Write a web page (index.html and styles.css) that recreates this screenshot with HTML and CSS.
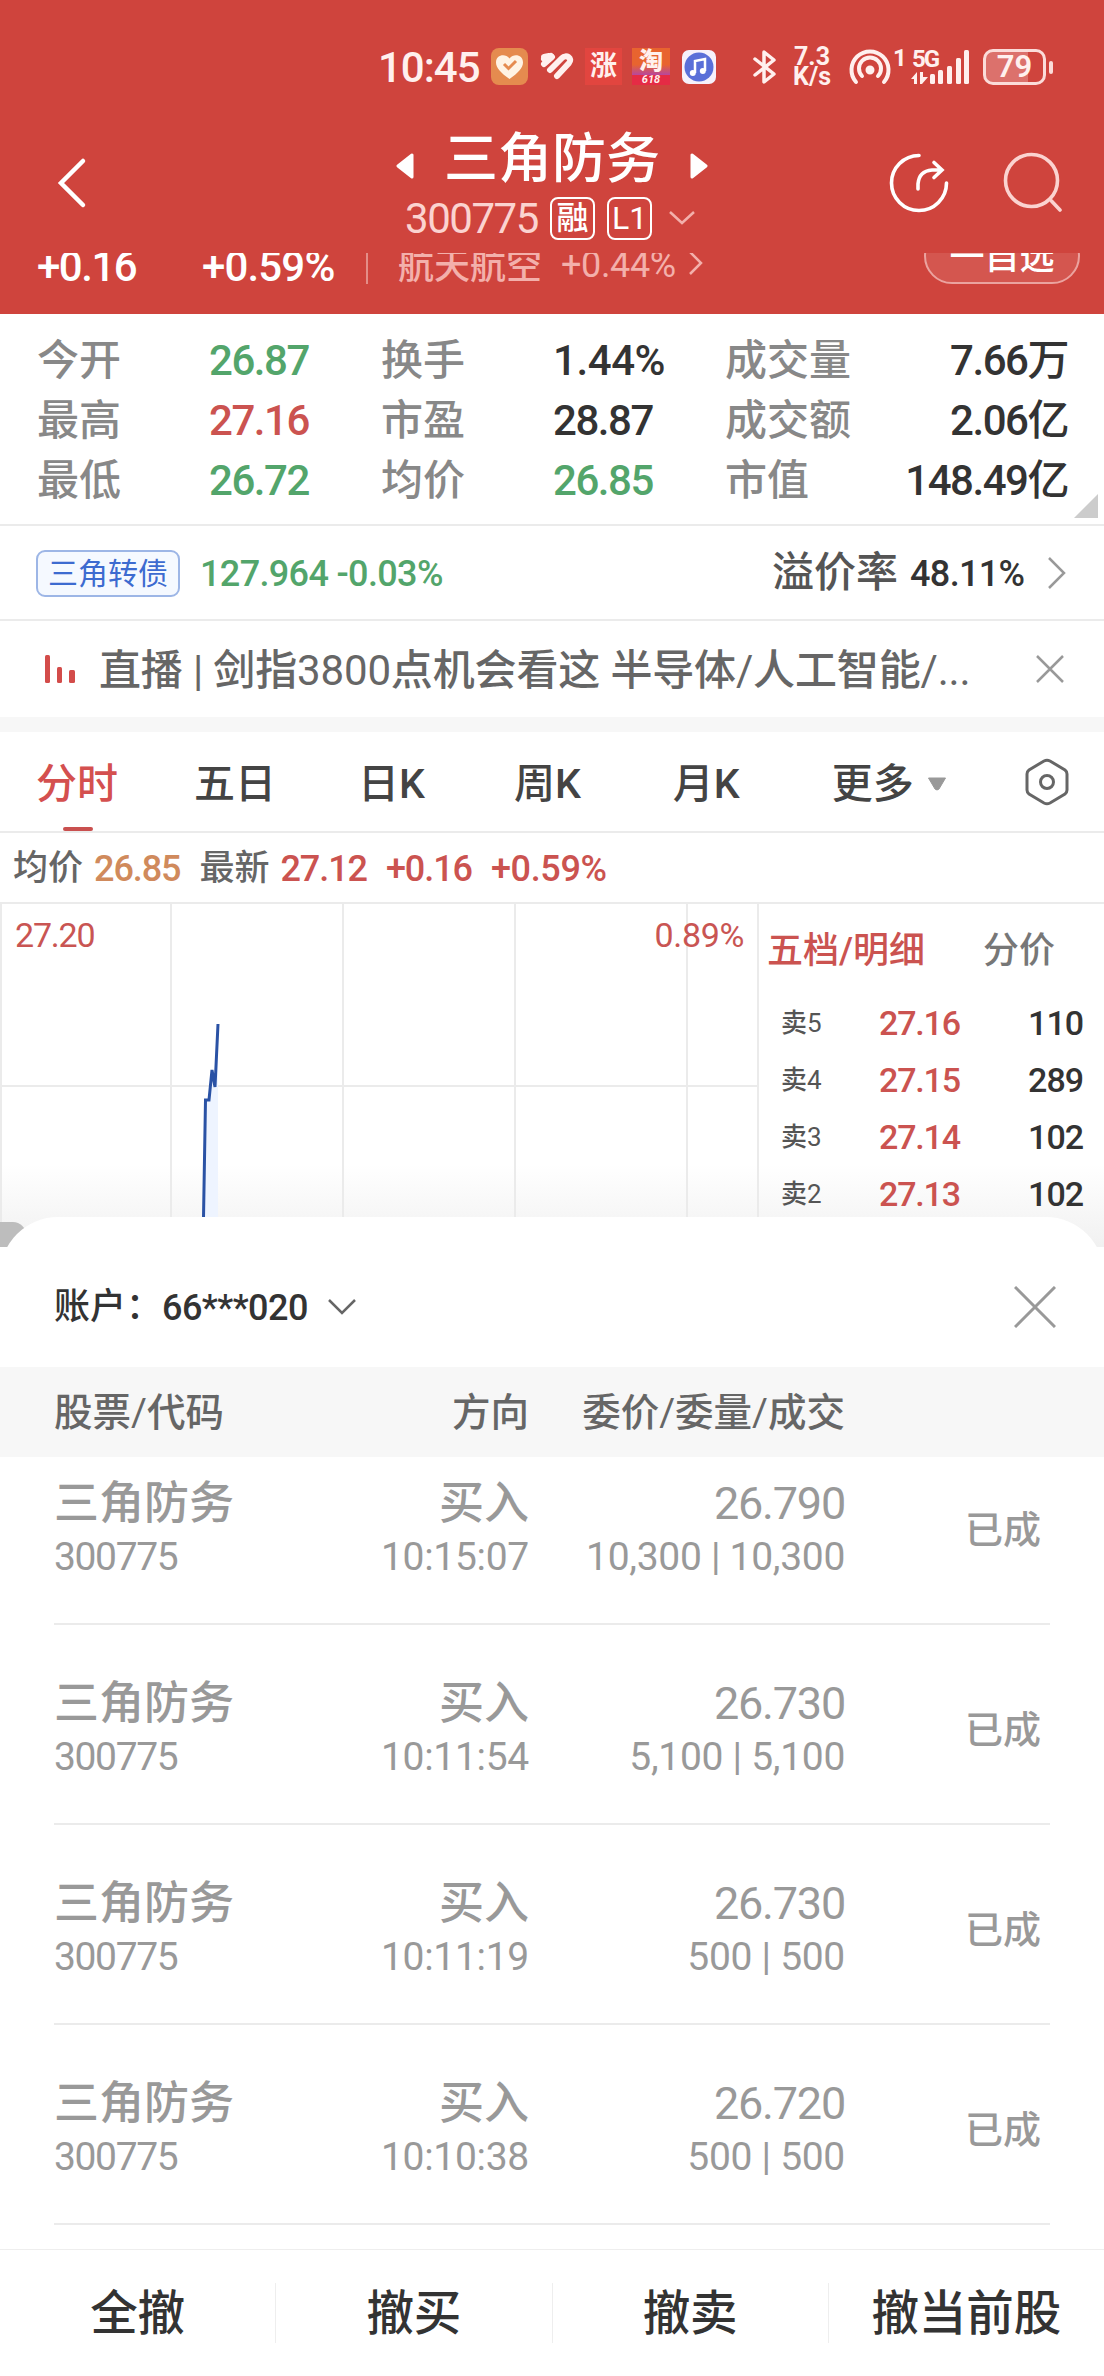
FILE: index.html
```html
<!DOCTYPE html>
<html lang="zh-CN">
<head>
    <meta charset="UTF-8">
    <meta name="viewport" content="width=device-width, initial-scale=1.0">
    <title>三角防务 300775</title>
    <link rel="stylesheet" href="styles.css">
</head>
<body>
    <header class="header">
        <div class="status-bar">
            <span class="clock">10:45</span>
            <svg class="app-heart" width="37" height="37" viewBox="0 0 37 37">
                <rect width="37" height="37" rx="8" fill="#e58b4f"/>
                <path d="M18.500 31C10 25 5 20 5 14.500C5 7 14 5 18.500 10.500C23 5 32 7 32 14.500C32 20 27 25 18.500 31Z" fill="#fff3e4"/>
                <path d="M13 16l4.500 4.500L25 13" fill="none" stroke="#e58b4f" stroke-width="3"/>
            </svg>
            <svg class="app-mi" width="34" height="30" viewBox="0 0 34 30" fill="none" stroke="#fff0ee" stroke-width="6" stroke-linecap="round">
                <path d="M4 5L9 4M4 12L12 5M10 18L22 6C26 2 33 6 29 11L17 24"/>
                <path d="M4 7L6 9L11 4"/>
            </svg>
            <span class="app-icon app-zhang">涨</span>
            <span class="app-icon app-tao"><b>淘</b><i>618</i></span>
            <svg class="app-music" width="34" height="34" viewBox="0 0 34 34">
                <rect width="34" height="34" rx="7" fill="#f6f1fb"/>
                <circle cx="17" cy="17" r="14.500" fill="#5a6fd8"/>
                <path d="M13 23V11L23 9V21" fill="none" stroke="#fff" stroke-width="2.500"/>
                <circle cx="10.800" cy="23" r="3" fill="#fff"/>
                <circle cx="20.800" cy="21" r="3" fill="#fff"/>
            </svg>
            <svg class="bluetooth" width="24" height="36" viewBox="0 0 24 36" fill="none" stroke="#fff0ee" stroke-width="3.500" stroke-linejoin="round" stroke-linecap="round">
                <path d="M2 10L21 25L11 33V3L21 11L2 26"/>
            </svg>
            <span class="net-speed"><span>7.3</span><span>K/s</span></span>
            <svg class="hotspot" width="42" height="36" viewBox="0 0 42 36" fill="none" stroke="#fff0ee" stroke-width="4" stroke-linecap="round">
                <path d="M7 33A18.500 18.500 0 1 1 35 33"/>
                <path d="M13 27A11 11 0 1 1 29 27"/>
                <circle cx="21" cy="21" r="2.500" fill="#fff0ee"/>
            </svg>
            <span class="sim">1</span>
            <span class="signal">
                <span class="sim">5G</span>
                <svg width="60" height="36" viewBox="0 0 60 36" fill="#fff0ee">
                    <path d="M0 30L6 23V35H3V30ZM9 23H12V28H17L11 35H9Z"/>
                    <rect x="19" y="25" width="5" height="10" rx="1.500"/>
                    <rect x="27" y="21" width="5" height="14" rx="1.500"/>
                    <rect x="36" y="17" width="5" height="18" rx="1.500"/>
                    <rect x="45" y="9" width="5" height="26" rx="1.500"/>
                    <rect x="53" y="1" width="5" height="34" rx="1.500"/>
                </svg>
            </span>
            <span class="battery">79</span>
        </div>

        <div class="nav">
            <svg class="back" width="30" height="52" viewBox="0 0 30 52">
                <path d="M26 4L4 26L26 48" fill="none" stroke="#fff" stroke-width="4.500" stroke-linecap="round"/>
            </svg>
            <div class="nav-title">
                <div class="stock-name">
                    <svg width="18" height="26" viewBox="0 0 18 26"><path d="M16 2V24L2 13Z" fill="#fff" stroke="#fff" stroke-width="3" stroke-linejoin="round"/></svg>
                    <h1>三角防务</h1>
                    <svg width="18" height="26" viewBox="0 0 18 26"><path d="M2 2V24L16 13Z" fill="#fff" stroke="#fff" stroke-width="3" stroke-linejoin="round"/></svg>
                </div>
                <div class="stock-code">
                    <span class="num">300775</span>
                    <span class="mark">融</span>
                    <span class="mark">L1</span>
                    <svg width="26" height="14" viewBox="0 0 26 14"><path d="M1 1L13 12L25 1" fill="none" stroke="#f3b0ab" stroke-width="2.500"/></svg>
                </div>
            </div>
            <svg class="share" width="60" height="60" viewBox="0 0 60 60" fill="none" stroke="#fff" stroke-width="3.600" stroke-linecap="round">
                <path d="M30 2.500A27.500 27.500 0 1 0 57.500 30"/>
                <path d="M29 36V31Q30 18 43 17H52M45 9.500L53 17L45 24.500"/>
            </svg>
            <svg class="search" width="60" height="60" viewBox="0 0 60 60" fill="none" stroke="#fbd3d0" stroke-width="3.600" stroke-linecap="round">
                <circle cx="28.500" cy="28.500" r="26"/>
                <path d="M48.500 49L57 58"/>
            </svg>
        </div>

        <div class="ticker">
            <span class="num change">+0.16</span>
            <span class="num percent">+0.59%</span>
            <span class="sector">航天航空</span>
            <span class="num sector-change">+0.44%</span>
            <svg width="15" height="26" viewBox="0 0 15 26"><path d="M2 2L13 13L2 24" fill="none" stroke="#f3b0ab" stroke-width="2.500"/></svg>
            <span class="pill">一自选</span>
        </div>
    </header>

    <section class="quote">
        <span>今开</span><b class="num green">26.87</b>
        <span>换手</span><b class="num turnover">1.44%</b>
        <span>成交量</span><b class="num last">7.66万</b>
        <span>最高</span><b class="num red">27.16</b>
        <span>市盈</span><b class="num">28.87</b>
        <span>成交额</span><b class="num last">2.06亿</b>
        <span>最低</span><b class="num green">26.72</b>
        <span>均价</span><b class="num green">26.85</b>
        <span>市值</span><b class="num last">148.49亿</b>
    </section>

    <section class="bond">
        <span class="bond-tag">三角转债</span>
        <span class="num green">127.964 -0.03%</span>
        <span class="premium">溢价率</span>
        <span class="num premium-value">48.11%</span>
        <svg width="20" height="34" viewBox="0 0 20 34"><path d="M2 2L17 17L2 32" fill="none" stroke="#999" stroke-width="2.500"/></svg>
    </section>

    <section class="live">
        <svg width="31" height="28" viewBox="0 0 31 28" fill="#d34c4a">
            <rect width="5" height="28" rx="1.500"/>
            <rect x="12" y="12" width="5" height="16" rx="1.500"/>
            <rect x="24" y="15" width="6" height="13" rx="1.500"/>
        </svg>
        <p>直播 | 剑指3800点机会看这 半导体/人工智能/...</p>
        <svg width="28" height="28" viewBox="0 0 28 28"><path d="M1 1L27 27M27 1L1 27" stroke="#999" stroke-width="2.500"/></svg>
    </section>

    <nav class="tabs">
        <a class="tab active">分时</a>
        <a class="tab">五日</a>
        <a class="tab">日K</a>
        <a class="tab">周K</a>
        <a class="tab">月K</a>
        <a class="tab">更多</a>
        <svg class="caret" width="20" height="14" viewBox="0 0 20 14"><path d="M1.500 1H18.500L12 12Q10 14 8 12Z" fill="#999" stroke="#999" stroke-linejoin="round"/></svg>
        <svg class="setting" width="44" height="48" viewBox="0 0 44 48" fill="none" stroke="#666" stroke-width="3">
            <path d="M19 3Q22 1.500 25 3L40 12Q42 13.500 42 16V32Q42 34.500 40 36L25 45Q22 46.500 19 45L4 36Q2 34.500 2 32V16Q2 13.500 4 12Z"/>
            <circle cx="22" cy="24" r="6.500"/>
        </svg>
    </nav>

    <section class="summary">
        <span>均价</span><b class="num orange">26.85</b>
        <span class="latest">最新</span><b class="num red">27.12</b>
        <b class="num red">+0.16</b>
        <b class="num red">+0.59%</b>
    </section>

    <section class="market">
        <div class="chart">
            <svg width="760" height="343" viewBox="0 0 760 343">
                <g stroke="#ebebeb" stroke-width="2">
                    <path d="M1 0V343M171 0V343M343 0V343M515 0V343M687 0V343M758 0V343M0 182H758"/>
                </g>
                <path d="M203.500 343L205.500 196H209L212 166L215 183L218 120V343Z" fill="#eef4ff"/>
                <path d="M203 343L205.500 196H209L212 166L215 183L218 120" fill="none" stroke="#2a52a5" stroke-width="3"/>
            </svg>
            <span class="num chart-max">27.20</span>
            <span class="num chart-pct">0.89%</span>
            <i class="handle"></i>
        </div>
        <div class="book">
            <div class="book-head"><span class="red">五档/明细</span><span>分价</span></div>
            <div class="book-row"><span>卖5</span><b class="num red">27.16</b><b class="num">110</b></div>
            <div class="book-row"><span>卖4</span><b class="num red">27.15</b><b class="num">289</b></div>
            <div class="book-row"><span>卖3</span><b class="num red">27.14</b><b class="num">102</b></div>
            <div class="book-row"><span>卖2</span><b class="num red">27.13</b><b class="num">102</b></div>
        </div>
    </section>

    <main class="sheet">
        <div class="account">
            <span>账户：</span><span class="num">66***020</span>
            <svg width="28" height="16" viewBox="0 0 28 16"><path d="M1 1L14 14L27 1" fill="none" stroke="#666" stroke-width="2.500"/></svg>
            <svg class="close" width="42" height="42" viewBox="0 0 42 42"><path d="M1 1L41 41M41 1L1 41" stroke="#999" stroke-width="3"/></svg>
        </div>
        <div class="order-head"><span>股票/代码</span><span>方向</span><span>委价/委量/成交</span></div>
        <div class="orders">
            <article class="order">
                <div><h2>三角防务</h2><p class="num">300775</p></div>
                <div><h2>买入</h2><p class="num wide">10:15:07</p></div>
                <div><h2 class="num">26.790</h2><p class="num wide">10,300 | 10,300</p></div>
                <span class="state">已成</span>
            </article>
            <article class="order">
                <div><h2>三角防务</h2><p class="num">300775</p></div>
                <div><h2>买入</h2><p class="num wide">10:11:54</p></div>
                <div><h2 class="num">26.730</h2><p class="num wide">5,100 | 5,100</p></div>
                <span class="state">已成</span>
            </article>
            <article class="order">
                <div><h2>三角防务</h2><p class="num">300775</p></div>
                <div><h2>买入</h2><p class="num wide">10:11:19</p></div>
                <div><h2 class="num">26.730</h2><p class="num wide">500 | 500</p></div>
                <span class="state">已成</span>
            </article>
            <article class="order">
                <div><h2>三角防务</h2><p class="num">300775</p></div>
                <div><h2>买入</h2><p class="num wide">10:10:38</p></div>
                <div><h2 class="num">26.720</h2><p class="num wide">500 | 500</p></div>
                <span class="state">已成</span>
            </article>
        </div>
    </main>

    <footer class="actions">
        <button>全撤</button>
        <button>撤买</button>
        <button>撤卖</button>
        <button>撤当前股</button>
    </footer>
</body>
</html>
```
FILE: styles.css
```css
:root {
    --brand: #cf443d;
    --red: #cb5350;
    --green: #53a56b;
    --line: #ebebeb;
    --text: #333;
    --gray: #888;
}

* {
    box-sizing: border-box;
    margin: 0;
    padding: 0;
}

body {
    width: 1104px;
    height: 2376px;
    overflow: hidden;
    background: #fff;
    color: var(--text);
    font-family: Roboto, "Noto Sans CJK SC", sans-serif;
    font-size: 42px;
    font-weight: 450;
    line-height: 60px;
    white-space: nowrap;
}

svg {
    display: block;
    flex: none;
}

.num {
    font-weight: 450;
    letter-spacing: -0.035em;
}

.red { color: var(--red); }
.green { color: var(--green); }
.orange { color: #d08a5c; }

/* 顶部 */
.header {
    height: 314px;
    background: var(--brand);
    color: #fff;
}

.status-bar {
    display: flex;
    align-items: center;
    height: 133px;
    padding-left: 378px;
    color: #fff0ee;
}

.clock {
    width: 113px;
    padding-top: 2px;
    font-weight: 500;
    font-size: 42px;
    letter-spacing: -1px;
}

.app-mi { margin-left: 12px; }

.app-icon {
    width: 37px;
    height: 37px;
    margin-left: 11px;
    background: #e2453f;
    font-size: 27px;
    font-weight: bold;
    line-height: 37px;
    text-align: center;
}

.app-tao {
    display: flex;
    flex-direction: column;
    width: 38px;
    margin-left: 10px;
    background: linear-gradient(#e8642f 0 45%, #b9489a 72%, #e52b45 72%);
}

.app-tao b {
    height: 26px;
    font-size: 24px;
    line-height: 26px;
}

.app-tao i {
    font-size: 11px;
    line-height: 11px;
}

.app-music { margin-left: 12px; }
.bluetooth { margin-left: 37px; }

.net-speed {
    display: flex;
    flex-direction: column;
    width: 42px;
    margin-left: 14px;
    font-size: 25px;
    font-weight: bold;
    line-height: 20px;
    text-align: center;
}

.hotspot { margin-left: 16px; }

.sim {
    align-self: flex-start;
    width: 18px;
    margin: 46px 0 0 2px;
    font-size: 24px;
    font-weight: bold;
    line-height: 24px;
    letter-spacing: -2px;
}

.signal {
    display: grid;
    width: 60px;
}

.signal > * {
    grid-area: 1 / 1;
}

.signal .sim {
    margin: -2px 0 0 1px;
}

.battery {
    position: relative;
    width: 63px;
    height: 36px;
    margin-left: 12px;
    border: 3px solid #fbdcd9;
    border-radius: 10px;
    background: linear-gradient(90deg, #dc716c 74%, transparent 74%);
    font-size: 31px;
    font-weight: 600;
    line-height: 30px;
    text-align: center;
}

.battery::after {
    content: "";
    position: absolute;
    top: 9px;
    right: -10px;
    width: 4px;
    height: 13px;
    border-radius: 2px;
    background: #fbdcd9;
}

.nav {
    display: flex;
    height: 120px;
    padding-left: 57px;
}

.back { margin-top: 24px; }

.nav-title {
    width: 324px;
    margin-left: 303px;
}

.stock-name {
    display: flex;
    align-items: center;
    justify-content: space-between;
    width: 312px;
    height: 54px;
    margin-left: 6px;
}

.stock-name svg { margin-top: 12px; }

h1 {
    font-size: 54px;
    font-weight: 500;
    line-height: 54px;
}

.stock-code {
    display: flex;
    align-items: center;
    gap: 12px;
    height: 62px;
    padding-left: 15px;
}

.stock-code .num {
    width: 133px;
    padding-top: 2px;
    color: #fbd3d0;
}

.stock-code svg { margin-left: 5px; }

.mark {
    width: 45px;
    height: 43px;
    border: 2px solid #fff;
    border-radius: 8px;
    font-size: 32px;
    line-height: 39px;
    text-align: center;
}

.share { margin: 20px 0 0 175px; }
.search { margin: 19px 0 0 54px; }

/* 滚动后只露出下半部分 */
.ticker {
    display: flex;
    align-items: flex-end;
    height: 31px;
    padding: 0 24px 0 37px;
    overflow: hidden;
    line-height: 35px;
}

.change { width: 165px; }

.percent {
    width: 166px;
    border-right: 2px solid #e48e88;
}

.change, .percent {
    font-weight: 500;
}

.percent { letter-spacing: -0.02em; }

.sector {
    width: 177px;
    padding-left: 30px;
    color: #f3b0ab;
    font-size: 36px;
    line-height: 34px;
}

.sector-change {
    width: 127px;
    margin-left: 16px;
    color: #f3b0ab;
    font-size: 36px;
    line-height: 38px;
    letter-spacing: -0.01em;
}

.ticker svg { margin-bottom: 8px; }

.pill {
    width: 156px;
    height: 56px;
    margin-left: auto;
    border: 2px solid #eba39f;
    border-radius: 28px;
    background: #d4564f;
    font-size: 35px;
    font-weight: 500;
    line-height: 56px;
    text-align: center;
}

/* 行情 */
.quote {
    position: relative;
    display: grid;
    grid-template-columns: 172px 172px 172px 172px 150px 1fr;
    grid-auto-rows: 60px;
    height: 212px;
    padding: 17px 36px 0 37px;
    border-bottom: 2px solid var(--line);
}

.quote span { color: var(--gray); }
.quote .num { font-weight: 500; }
.quote .turnover { letter-spacing: -0.01em; }
.last { text-align: right; }

.quote::after {
    content: "";
    position: absolute;
    right: 6px;
    bottom: 6px;
    border: 12px solid #ccc;
    border-top-color: transparent;
    border-left-color: transparent;
}

.bond {
    display: flex;
    align-items: center;
    height: 95px;
    padding: 1px 37px 0 36px;
    border-bottom: 2px solid var(--line);
}

.bond .num {
    padding-top: 1px;
    font-size: 36px;
    font-weight: 500;
    letter-spacing: -0.018em;
}

.bond-tag {
    width: 144px;
    height: 47px;
    margin-right: 20px;
    border: 2px solid #9db6e6;
    border-radius: 9px;
    background: #f5f9ff;
    color: #3d6bd0;
    font-size: 30px;
    font-weight: 400;
    line-height: 43px;
    text-align: center;
}

.premium {
    margin-left: auto;
    color: #555;
}

.bond .premium-value {
    width: 117px;
    margin: 0 20px 0 12px;
}

.live {
    display: flex;
    align-items: center;
    height: 111px;
    padding: 0 40px 0 45px;
    border-bottom: 15px solid #f7f7f7;
    color: #666;
}

.live p {
    margin-left: 23px;
    padding-top: 3px;
    letter-spacing: -0.15px;
}

.live svg:last-child { margin-left: auto; }

.tabs {
    display: flex;
    align-items: center;
    height: 101px;
    padding: 4px 35px 0 36px;
    border-bottom: 2px solid var(--line);
    color: #444;
    font-size: 41px;
    font-weight: 500;
}

.tab { margin-right: 76px; }
.tab:nth-child(2) { margin-right: 82px; }
.tab:nth-child(3) { margin-right: 89px; }
.tab:nth-child(4), .tab:nth-child(5) { margin-right: 92px; }
.tab:nth-child(6) { margin-right: 13px; }

.active {
    position: relative;
    color: #d4504f;
}

.active::after {
    content: "";
    position: absolute;
    left: 27px;
    bottom: -17px;
    width: 30px;
    height: 4px;
    border-radius: 2px;
    background: #c9504f;
}

.setting {
    margin: -3px 0 0 auto;
}

.summary {
    display: flex;
    align-items: center;
    gap: 19px;
    height: 69px;
    padding: 3px 13px 0;
    color: #666;
    font-size: 35px;
}

.summary span { margin-right: -8px; }

.summary .num {
    font-size: 36px;
    font-weight: 500;
    letter-spacing: -0.03em;
}

.summary .num:last-child { letter-spacing: -0.01em; }

.market {
    display: flex;
    height: 345px;
    border-top: 2px solid var(--line);
    background: linear-gradient(#fff 76%, #f1f1f1);
}

.chart {
    position: relative;
    width: 760px;
}

.chart-max, .chart-pct {
    position: absolute;
    top: 1px;
    left: 15px;
    color: #c95553;
    font-size: 34px;
}

.chart-pct {
    left: auto;
    right: 16px;
    letter-spacing: -0.01em;
}

.handle {
    position: absolute;
    left: 0;
    bottom: 0;
    width: 26px;
    height: 25px;
    border-radius: 0 13px 0 0;
    background: #bdbdbd;
}

.book {
    flex: 1;
    padding: 17px 21px 0 7px;
}

.book-head {
    display: flex;
    gap: 58px;
    height: 72px;
    color: #777;
    font-size: 36px;
}

.book-head .red { font-weight: 500; }

.book-row {
    display: flex;
    justify-content: space-between;
    height: 57px;
    padding-left: 14px;
    font-size: 34px;
}

.book-row span {
    width: 98px;
    color: #555;
    font-size: 26px;
}

.book-row .num { font-weight: 500; }

.book-row .num:last-child {
    flex: 1;
    text-align: right;
    letter-spacing: -0.03em;
}

/* 委托列表 */
.sheet {
    position: relative;
    height: 1032px;
    margin-top: -30px;
    overflow: hidden;
    border-radius: 58px 58px 0 0;
    background: #fff;
}

.account {
    display: flex;
    align-items: center;
    height: 150px;
    padding: 30px 48px 0 54px;
    font-size: 36px;
    font-weight: 500;
}

.account .num {
    margin-right: 20px;
    padding-top: 1px;
    font-weight: 500;
    letter-spacing: -0.015em;
}

.close { margin-left: auto; }

.order-head, .order {
    display: grid;
    grid-template-columns: 230px 245px 316px 1fr;
}

.order-head {
    height: 90px;
    padding: 0 54px;
    background: #f7f7f7;
    color: #666;
    font-size: 38.500px;
    line-height: 92px;
}

.order-head span + span,
.order div + div {
    text-align: right;
}

.orders {
    margin-top: -32px;
}

.order {
    height: 200px;
    margin: 0 54px;
    padding-top: 52px;
    border-bottom: 2px solid var(--line);
    color: #999;
}

.order h2 {
    font-size: 45px;
    font-weight: 450;
    line-height: 53px;
}

.order h2.num { letter-spacing: -0.027em; }

.order p {
    font-size: 39px;
    line-height: 54px;
}

.order p.wide { letter-spacing: -0.3px; }

.state {
    padding-right: 9px;
    font-size: 38px;
    line-height: 107px;
    text-align: right;
}

.actions {
    display: flex;
    align-items: center;
    height: 127px;
    border-top: 1px solid #eee;
    background: #fff;
}

.actions button {
    flex: 1 0 0;
    height: 60px;
    padding-top: 2px;
    border: 0;
    border-left: 1px solid #eee;
    background: none;
    color: var(--text);
    font: 500 47.500px/58px Roboto, "Noto Sans CJK SC", sans-serif;
}

.actions button:first-child { border-left: 0; }
```
